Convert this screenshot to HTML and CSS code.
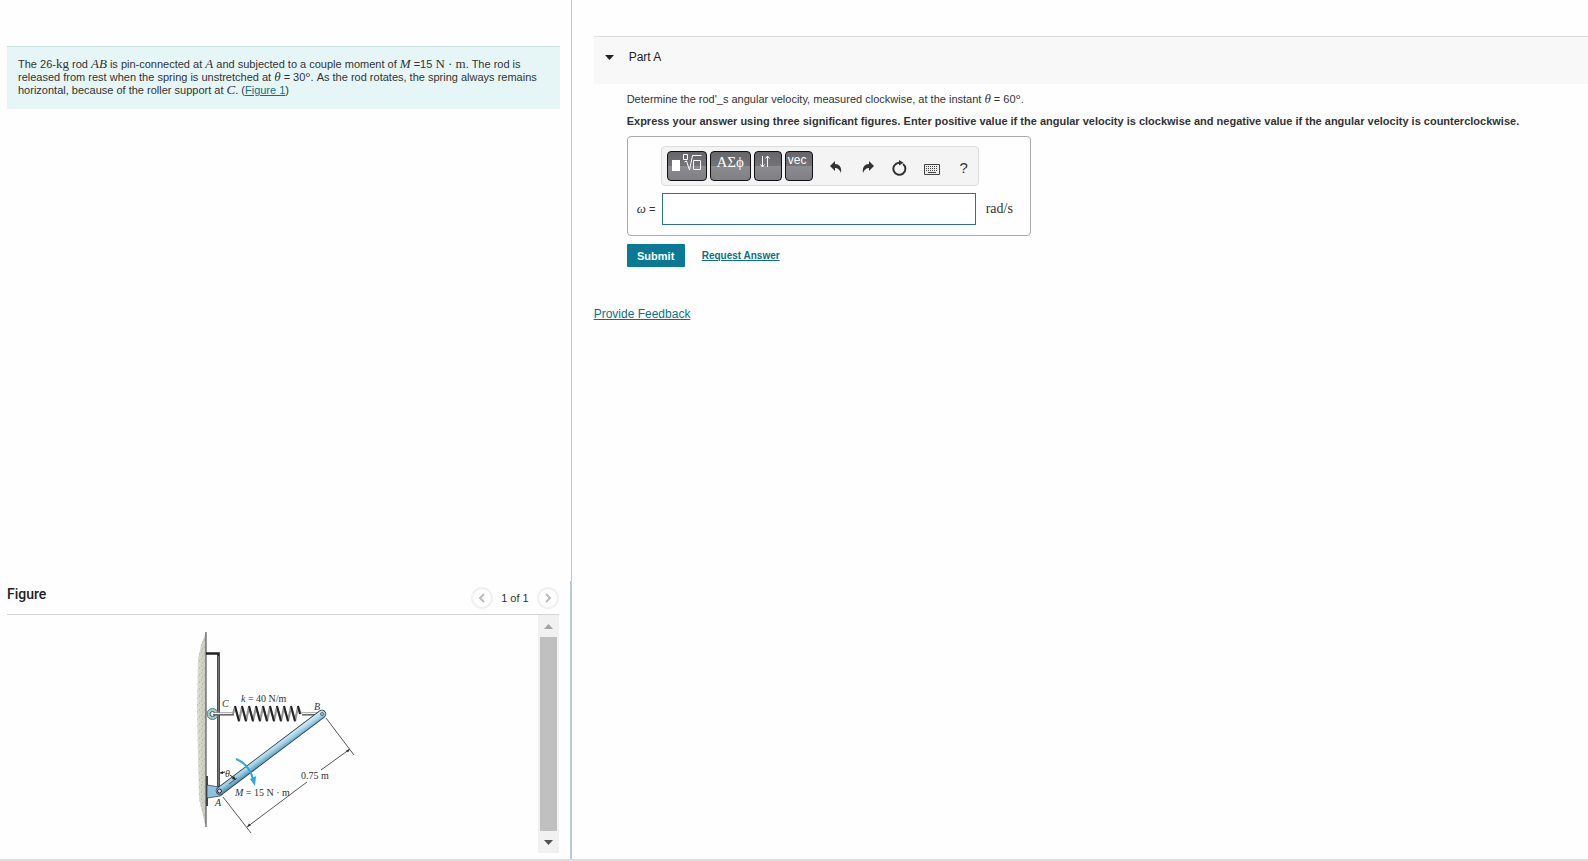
FILE: index.html
```html
<!DOCTYPE html>
<html lang="en">
<head>
    <meta charset="UTF-8">
    <title>Part A</title>
    <link rel="stylesheet" href="styles.css">
</head>
<body>

    <div class="left">

        <div class="problem">
            <p>The 26-<span class="math">kg</span> rod <i class="math">AB</i> is pin-connected at <i class="math">A</i> and subjected to a couple moment of <i class="math">M</i> =15 <span class="math">N · m</span>. The rod is released from rest when the spring is unstretched at <i class="math">θ</i> = 30<span class="math">°</span>. As the rod rotates, the spring always remains horizontal, because of the roller support at <i class="math">C</i>. (<a href="#figure">Figure 1</a>)</p>
        </div>

        <div class="figure" id="figure">
            <div class="figure-head">
                <h2>Figure</h2>
                <div class="pager">
                    <button type="button" aria-label="Previous figure">
                        <svg width="8" height="10" viewBox="0 0 8 10"><path d="M6 1 2 5l4 4"/></svg>
                    </button>
                    <span>1 of 1</span>
                    <button type="button" aria-label="Next figure">
                        <svg width="8" height="10" viewBox="0 0 8 10"><path d="M2 1l4 4-4 4"/></svg>
                    </button>
                </div>
            </div>

            <div class="figure-body">
                <div class="picture">
                    <svg width="170" height="220" viewBox="190 620 170 220">
                        <defs>
                            <linearGradient id="rod" gradientUnits="userSpaceOnUse" x1="268" y1="749" x2="273" y2="756">
                                <stop offset="0" stop-color="#d8eef7"/>
                                <stop offset="0.5" stop-color="#9fcfe4"/>
                                <stop offset="1" stop-color="#5a9dbb"/>
                            </linearGradient>
                            <linearGradient id="wall" x1="0" x2="1" y1="0" y2="0">
                                <stop offset="0" stop-color="#dcdcd2"/>
                                <stop offset="1" stop-color="#c9cac0"/>
                            </linearGradient>
                            <pattern id="dots" width="5" height="7" patternUnits="userSpaceOnUse">
                                <path d="M1 1h1M4 3h1M2 5h1" stroke="#aaac9f" stroke-width="1"/>
                            </pattern>
                        </defs>

                        <!-- wall -->
                        <path d="M206 632l-5 13-3 14-1 50 1 50 1 40 6 25h1z" fill="url(#wall)"/>
                        <path d="M206 632l-5 13-3 14-1 50 1 50 1 40 6 25h1z" fill="url(#dots)"/>
                        <path d="M206 632v195" stroke="#555" stroke-width="1.2"/>
                        <path d="M207 776v30" stroke="#444" stroke-width="2"/>

                        <!-- guide -->
                        <path d="M206 653.500h12.500V787" fill="none" stroke="#222" stroke-width="2.600"/>
                        <path d="M218.500 656v130" stroke="#888" stroke-width="0.800"/>

                        <!-- roller and spring -->
                        <circle cx="212.500" cy="714" r="5.500" fill="#9fd0c8" stroke="#54827d"/>
                        <circle cx="212.500" cy="714" r="2.500" fill="#e4f3f0" stroke="#456"/>
                        <path d="M213 714h21M302 714h18" stroke="#444" stroke-width="3"/>
                        <path d="M213 713.500h21M302 713.500h18" stroke="#eee" stroke-width="1.400"/>
                        <path d="M233 714l2-7 4 14 3-14 4 14 3-14 4 14 3-14 4 14 3-14 4 14 3-14 4 14 3-14 4 14 3-14 4 14 3-14 4 14 3-14 3 7" fill="none" stroke="#999" stroke-width="2.200" stroke-linejoin="round"/>
                        <path d="M235 706l4 15M242 706l4 15M249 706l4 15M256 706l4 15M263 706l4 15M270 706l4 15M277 706l4 15M284 706l4 15M291 706l4 15M298 706l2 8" stroke="#222" stroke-width="2"/>

                        <!-- rod and pin support -->
                        <path d="M207 785l12 2c5 1 5 8 1 9l-13 2z" fill="#8fc3dc" stroke="#345" stroke-width="0.800"/>
                        <path d="M220 791 322 714" stroke="#2d4552" stroke-width="8.500" stroke-linecap="round"/>
                        <path d="M220 791 322 714" stroke="url(#rod)" stroke-width="6.800" stroke-linecap="round"/>
                        <path d="M229 784l8-6" stroke="#345" stroke-width="0.800"/>
                        <circle cx="219.500" cy="791" r="2" fill="#dde" stroke="#222"/>
                        <circle cx="322" cy="714" r="1.500" fill="#bcc" stroke="#345" stroke-width="0.700"/>

                        <!-- dimension lines -->
                        <path d="M223 797l28 36M326 718l28 37M247 827l60-45M321 770l29-21" fill="none" stroke="#444" stroke-width="0.900"/>
                        <path d="M247 827l2-3.500 2 2zM350 749l-2 3.500-2-2z" fill="#333"/>

                        <!-- angle and moment -->
                        <path d="M220 773l5-1M230 775l5 4" stroke="#222" stroke-width="1" fill="none"/>
                        <path d="M220 773l3-2v3zM236 780l-4-1 2-3z" fill="#222"/>
                        <path d="M236 759q13 5 17 20" fill="none" stroke="#27a9e6" stroke-width="2"/>
                        <path d="M255 786l-5-7 6-3z" fill="#27a9e6"/>

                        <g class="labels">
                            <text x="222" y="707" font-style="italic">C</text>
                            <text x="241" y="702"><tspan font-style="italic">k</tspan> = 40 N/m</text>
                            <text x="314" y="710" font-style="italic">B</text>
                            <text x="225" y="777" font-style="italic">θ</text>
                            <text x="235" y="796"><tspan font-style="italic">M</tspan> = 15 N · m</text>
                            <text x="301" y="779">0.75 m</text>
                            <text x="215" y="806" font-style="italic">A</text>
                        </g>
                    </svg>
                </div>

                <div class="scroll">
                    <button type="button" aria-label="Scroll up">
                        <svg width="9" height="5" viewBox="0 0 9 5"><path d="M0 5h9L4.500 0z" fill="#a3a3a3"/></svg>
                    </button>
                    <div class="thumb"></div>
                    <button type="button" aria-label="Scroll down">
                        <svg width="9" height="5" viewBox="0 0 9 5"><path d="M0 0h9L4.500 5z" fill="#505050"/></svg>
                    </button>
                </div>
            </div>
        </div>

    </div>

    <div class="right">

        <div class="part-head">
            <svg width="9" height="5" viewBox="0 0 9 5"><path d="M0 0h9L4.500 5z" fill="#222"/></svg>
            <h1>Part A</h1>
        </div>

        <form class="part">
            <p>Determine the rod'_s angular velocity, measured clockwise, at the instant <i class="math">θ</i> = 60<span class="math">°</span>.</p>
            <p class="bold">Express your answer using three significant figures. Enter positive value if the angular velocity is clockwise and negative value if the angular velocity is counterclockwise.</p>

            <div class="answer">
                <div class="toolbar">
                    <button type="button" class="key key-tpl" aria-label="Templates">
                        <svg width="32" height="20" viewBox="0 0 32 20">
                            <path d="M1 7h8v11H1z" fill="#fff"/>
                            <path d="M13.500 9l2-1 3 9 3-14.500h9M22.500 7.500h7v9h-7zM12.500 1.500h4v5h-4z" fill="none" stroke="#fff"/>
                        </svg>
                    </button>
                    <button type="button" class="key key-greek">ΑΣϕ</button>
                    <button type="button" class="key key-arrows" aria-label="Arrows">
                        <svg width="12" height="14" viewBox="0 0 12 14"><path d="M2.500 1v11M.5 9.500l2 2.500 2-2.500M7.500 12V1M5.500 3.500L7.500 1l2 2.500" fill="none" stroke="#fff"/></svg>
                    </button>
                    <button type="button" class="key key-vec">vec</button>
                    <div class="tools">
                        <button type="button" aria-label="Undo">
                            <svg width="14" height="14" viewBox="0 0 14 14"><path d="M6 0v3c4 0 7 3 6 9-1-3-3-5-6-5v3L1 5z" fill="#333"/></svg>
                        </button>
                        <button type="button" aria-label="Redo">
                            <svg width="14" height="14" viewBox="0 0 14 14"><path d="M8 0v3c-4 0-7 3-6 9 1-3 3-5 6-5v3l5-5z" fill="#333"/></svg>
                        </button>
                        <button type="button" aria-label="Reset">
                            <svg width="16" height="16" viewBox="0 0 16 16"><path d="M11 4a6 6 0 1 1-4-1.200" fill="none" stroke="#333" stroke-width="2"/><path d="M7 0l4.500 2.800L7 5.500z" fill="#333"/></svg>
                        </button>
                        <button type="button" aria-label="Keyboard">
                            <svg width="16" height="16" viewBox="0 0 16 16"><path d="M.5 4.500h15v10H.5z" fill="#eee" stroke="#444"/><path d="M2 6.500h12M2 8.500h12M2 10.500h12" stroke="#444" stroke-width="1" stroke-dasharray="1 1"/><path d="M4 12.500h8" stroke="#444"/></svg>
                        </button>
                        <button type="button" aria-label="Help">?</button>
                    </div>
                </div>
                <div class="entry">
                    <label for="omega"><i class="math">ω</i> =</label>
                    <input type="text" id="omega">
                    <span class="math unit">rad/s</span>
                </div>
            </div>

            <div class="actions">
                <button type="submit" class="submit">Submit</button>
                <a href="#request">Request Answer</a>
            </div>
        </form>

        <a class="feedback" href="#feedback">Provide Feedback</a>

    </div>

</body>
</html>
```
FILE: styles.css
```css
* {
    margin: 0;
    padding: 0;
    box-sizing: border-box;
}

body {
    display: flex;
    height: 100vh;
    border-bottom: 2px solid #dcdcdc;
    background: #fefefe;
    color: #333;
    font: 11px/14px "Liberation Sans", Arial, sans-serif;
}

button {
    border: 0;
    background: none;
    color: #333;
    font: inherit;
}

a {
    color: #0b7285;
}

svg {
    display: block;
}

.math {
    font-family: "Liberation Serif", "Times New Roman", serif;
    font-size: 13px;
    line-height: 12px;
}

/* left column */

.left {
    display: flex;
    flex-direction: column;
    justify-content: space-between;
    width: 36%;
    padding-top: 46px;
    border-right: 1px solid #c4c8cc;
}

.problem {
    margin: 0 11px 0 7px;
    padding: 11px 12px 12px 11px;
    border-top: 1px solid #cfe0e0;
    background: #e6f6f7;
    line-height: 13px;
}

.figure {
    margin-right: -1px;
    padding: 0 11px 6px 7px;
    border-right: 2px solid #bccad8;
}

.figure-head {
    display: flex;
    justify-content: space-between;
    align-items: center;
    height: 34px;
    border-bottom: 1px solid #d4d4d4;
}

.figure-head h2 {
    padding-bottom: 7px;
    font-family: Roboto, sans-serif;
    font-size: 14px;
    font-weight: 500;
    color: #222;
}

.pager {
    display: flex;
    align-items: center;
    gap: 8px;
}

.pager button {
    display: flex;
    align-items: center;
    justify-content: center;
    width: 22px;
    height: 22px;
    border: 2px solid #f0f0f0;
    border-radius: 50%;
}

.pager path {
    fill: none;
    stroke: #bbb;
    stroke-width: 2;
}

.figure-body {
    display: flex;
    height: 238px;
}

.picture {
    display: flex;
    flex: 1;
    justify-content: center;
    padding: 5px 0 0 5px;
}

.labels {
    fill: #333;
    font-family: "Liberation Serif", serif;
    font-size: 10px;
}

.scroll {
    display: flex;
    flex-direction: column;
    width: 21px;
    background: #f1f1f1;
}

.scroll button {
    display: flex;
    align-items: center;
    justify-content: center;
    height: 22px;
}

.thumb {
    flex: 1;
    margin: 0 2px;
    background: #c0c0c0;
}

/* right column */

.right {
    flex: 1;
    padding: 36px 0 0 22px;
}

.part-head {
    display: flex;
    align-items: center;
    gap: 15px;
    height: 48px;
    padding: 0 0 7px 11px;
    border-top: 1px solid #ddd;
    background: #f8f8f8;
}

.part-head h1 {
    font-size: 12px;
    font-weight: normal;
    color: #222;
}

.part {
    padding: 8px 16px 0 33px;
}

.part p {
    margin-bottom: 8px;
}

.part .bold {
    font-weight: bold;
}

.answer {
    width: 404px;
    padding: 9px 9px 10px;
    border: 1px solid #aaa;
    border-radius: 4px;
}

.toolbar {
    display: flex;
    gap: 3px;
    width: 318px;
    height: 40px;
    margin: 0 0 7px 24px;
    padding: 4px 5px;
    border: 1px solid #ddd;
    border-radius: 4px;
    background: #f4f4f4;
}

.key {
    display: flex;
    justify-content: center;
    height: 30px;
    padding-top: 1px;
    border: 1px solid #111;
    border-radius: 4px;
    background: linear-gradient(#66666a, #747478 50%, #8c8c90 50%, #808084);
    color: #fff;
    font-size: 12px;
}

.key-tpl {
    width: 40px;
}

.key-greek {
    width: 41px;
    padding-top: 3px;
    font-family: "Liberation Serif", serif;
    font-size: 15px;
}

.key-arrows {
    width: 28px;
    padding: 3px 4px 0 0;
}

.key-vec {
    width: 28px;
    padding: 1px 3px 0 0;
}

.tools {
    display: flex;
    align-items: center;
    gap: 16px;
    padding: 4px 0 0 12px;
}

.tools button {
    display: flex;
    align-items: center;
    justify-content: center;
    width: 16px;
    height: 20px;
    font-size: 15px;
}

.entry {
    display: flex;
    align-items: center;
}

.entry label {
    width: 25px;
}

.entry input {
    width: 314px;
    height: 32px;
    padding: 0 6px;
    border: 1px solid #2b7489;
    background: #fff;
}

.unit {
    margin-left: 10px;
    font-size: 14px;
}

.actions {
    display: flex;
    align-items: center;
    gap: 17px;
    margin-top: 8px;
    font-size: 10px;
    font-weight: bold;
}

.submit {
    width: 58px;
    height: 23px;
    border-radius: 1px;
    background: #087a96;
    color: #fff;
    font-size: 11px;
}

.feedback {
    display: inline-block;
    margin-top: 40px;
    font-size: 12px;
}
```
